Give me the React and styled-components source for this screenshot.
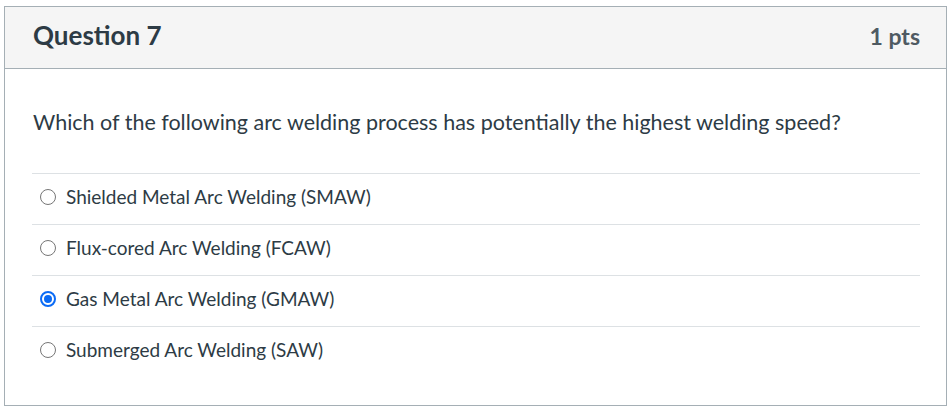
import React from 'react';
import styled, { createGlobalStyle } from 'styled-components';

const Global = createGlobalStyle`
    body {
        margin: 0;
        background: #fff;
        font-family: Lato, "Noto Sans", sans-serif;
        color: #2d3b45;
    }
`;

const Page = styled.div`
    padding: 6px 5px 3px 4px;
`;

const Card = styled.div`
    border: 1px solid #a5afb5;
    height: 400px;
    box-sizing: border-box;
    background: #fff;
`;

const Header = styled.div`
    display: flex;
    justify-content: space-between;
    align-items: baseline;
    height: 62px;
    box-sizing: border-box;
    padding: 13px 26px 0 28px;
    background: #f5f5f5;
    border-bottom: 1px solid #a5afb5;
`;

const Title = styled.h2`
    margin: 0;
    font-size: 26px;
    line-height: 1.2;
    font-weight: 700;
    color: #2d3b45;
`;

const Points = styled.span`
    font-size: 23px;
    line-height: 1.2;
    font-weight: 700;
    color: #4f5a62;
`;

const Body = styled.div`
    padding: 40px 26px 0 27px;
`;

const QuestionText = styled.p`
    margin: 0 0 36px;
    padding-left: 1px;
    font-size: 21.5px;
    line-height: 1.3;
    color: #2d3b45;
`;

const Answer = styled.label`
    display: flex;
    align-items: center;
    gap: 10px;
    height: 51px;
    box-sizing: border-box;
    border-top: 1px solid #dde1e4;
    padding: 0 0 4px 8px;
    font-size: 19px;
    color: #2d3b45;
`;

const Radio = styled.span`
    width: 16px;
    height: 16px;
    flex: none;
    border-radius: 50%;
    box-sizing: border-box;
    border: ${p => (p.checked ? '2px solid #0b6bf5' : '1px solid #767676')};
    display: flex;
    align-items: center;
    justify-content: center;
    &::after {
        content: '';
        width: 8px;
        height: 8px;
        border-radius: 50%;
        background: ${p => (p.checked ? '#0b6bf5' : 'transparent')};
    }
`;

const options = [
    'Shielded Metal Arc Welding (SMAW)',
    'Flux-cored Arc Welding (FCAW)',
    'Gas Metal Arc Welding (GMAW)',
    'Submerged Arc Welding (SAW)',
];

const App = () => {
    return (
        <>
            <Global />
            <Page>
                <Card>
                    <Header>
                        <Title>Question 7</Title>
                        <Points>1 pts</Points>
                    </Header>
                    <Body>
                        <QuestionText>
                            Which of the following arc welding process has potentially the highest welding speed?
                        </QuestionText>
                        <div>
                            {options.map((o, i) => (
                                <Answer key={i}>
                                    <Radio checked={i === 2} />
                                    {o}
                                </Answer>
                            ))}
                        </div>
                    </Body>
                </Card>
            </Page>
        </>
    );
};

export default App;
